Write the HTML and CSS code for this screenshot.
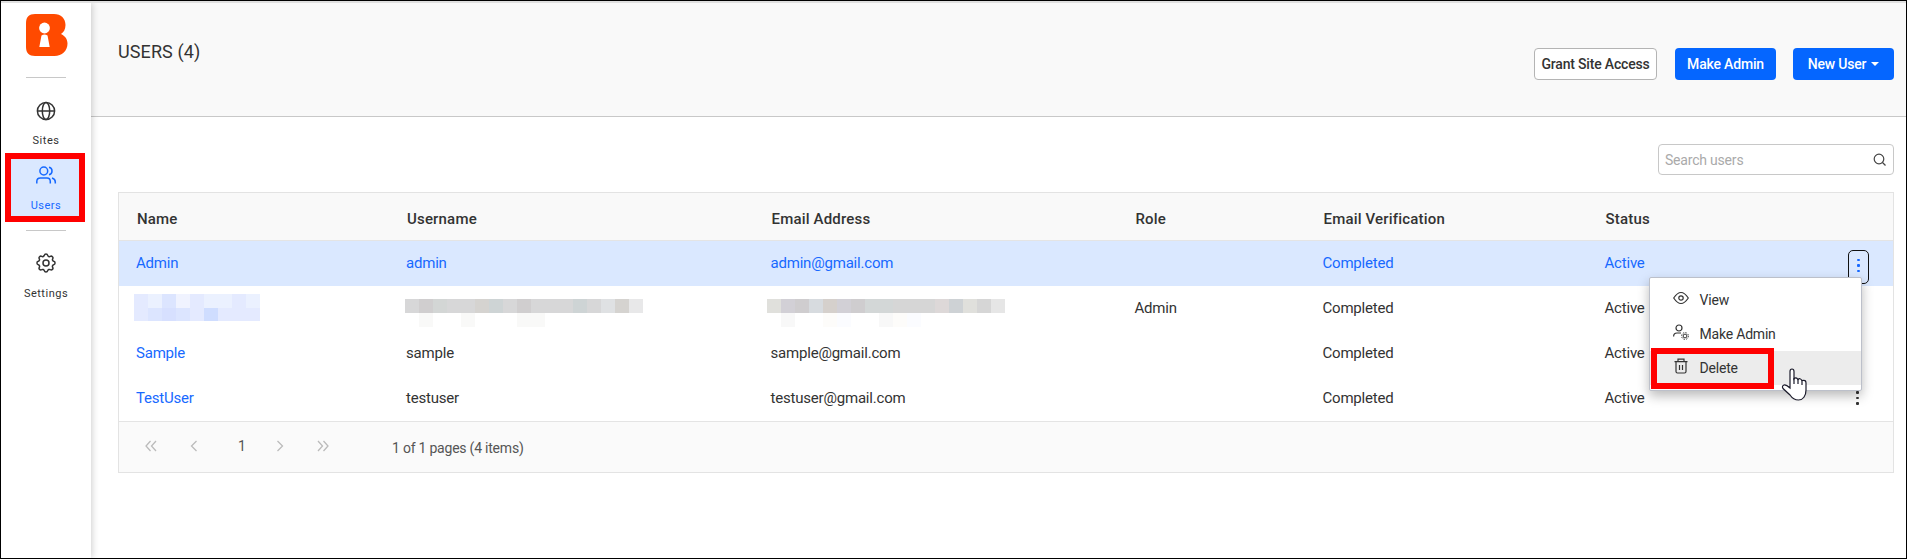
FILE: index.html
```html
<!DOCTYPE html>
<html lang="en">
<head>
<meta charset="utf-8">
<title>Users</title>
<link rel="stylesheet" href="styles.css">
</head>
<body>
<div class="app">
  <nav class="sidebar">
    <svg class="logo" width="42" height="42" viewBox="0 0 42 42"><path fill="#ff4a00" d="M9 0H28C35 0 39.500 4.500 39.500 11C39.500 15.500 37.500 18.500 35 20C39 22 41.500 25 41.500 29.500C41.500 37 36 42 28.500 42H9C3 42 0 39 0 33V9C0 3 3 0 9 0Z"/><circle cx="18.500" cy="14" r="5.400" fill="#fff"/><path fill="#fff" d="M15.500 21.500Q18.500 19.500 21.500 21.500L23.700 33H13.300Z"/></svg>
    <span class="rule"></span>
    <a class="nav-item nav-sites">
      <svg class="icon" width="20" height="20" viewBox="0 0 20 20"><circle cx="10" cy="10" r="8.600"/><ellipse cx="10" cy="10" rx="3.700" ry="8.600"/><path d="M1.400 10H18.600"/></svg>
      <span>Sites</span>
    </a>
    <a class="nav-item nav-users">
      <svg class="icon" width="22" height="19" viewBox="0 0 22 19"><circle cx="8.800" cy="5" r="3.900"/><path d="M1.800 17.500V15.500Q1.800 12 5.300 12H12Q15.300 12 15.300 15.500V17.500M14 1.200A3.900 3.900 0 0 1 14 8.800M17 12Q20.300 12.800 20.300 16V17.500"/></svg>
      <span>Users</span>
    </a>
    <span class="rule"></span>
    <a class="nav-item nav-settings">
      <svg class="icon" width="24" height="24" viewBox="0 0 24 24"><circle cx="12" cy="12" r="3"/><path d="M10.300 4.300c.4-1.800 3-1.800 3.400 0a1.700 1.700 0 0 0 2.600 1.100c1.500-.9 3.300.8 2.400 2.400a1.700 1.700 0 0 0 1 2.500c1.800.4 1.800 3 0 3.400a1.700 1.700 0 0 0-1 2.600c.9 1.500-.9 3.300-2.400 2.400a1.700 1.700 0 0 0-2.600 1c-.4 1.800-3 1.800-3.400 0a1.700 1.700 0 0 0-2.600-1c-1.500.9-3.300-.9-2.400-2.400a1.700 1.700 0 0 0-1-2.600c-1.800-.4-1.800-3 0-3.400a1.700 1.700 0 0 0 1-2.500c-.9-1.600.9-3.300 2.400-2.400 1 .6 2.300.1 2.600-1.100z"/></svg>
      <span>Settings</span>
    </a>
  </nav>
  <main class="main">
    <header class="header">
      <h1 class="title">USERS (4)</h1>
      <div class="actions">
        <button class="btn btn-light">Grant Site Access</button>
        <button class="btn">Make Admin</button>
        <button class="btn">New User<i class="caret"></i></button>
      </div>
    </header>
    <div class="search">
      <span>Search users</span>
      <svg width="14" height="14" viewBox="0 0 14 14"><circle cx="6" cy="6" r="4.800"/><path d="M9.500 9.500L12.500 12.500"/></svg>
    </div>
    <section class="grid">
      <div class="row head"><span>Name</span><span>Username</span><span>Email Address</span><span>Role</span><span>Email Verification</span><span>Status</span><span></span></div>
      <div class="row selected"><span>Admin</span><span>admin</span><span>admin@gmail.com</span><span></span><span>Completed</span><span>Active</span>
        <div class="more-cell"><button class="more"><i></i><i></i><i></i></button>
          <div class="menu">
            <div class="menu-item"><svg width="16" height="14" viewBox="0 0 16 14"><path d="M.7 7Q8-4 15.300 7Q8 18 .7 7Z"/><circle cx="8" cy="7" r="2.200"/></svg><span>View</span></div>
            <div class="menu-item"><svg width="16" height="16" viewBox="0 0 16 16"><circle cx="6" cy="4" r="3"/><path d="M.6 12.500Q.6 9 4 9H8"/><g class="cog"><circle cx="12" cy="12" r="1.900"/><circle cx="12" cy="12" r="3.400" stroke-dasharray="1.400 1.270"/></g></svg><span>Make Admin</span></div>
            <div class="menu-item hover"><svg width="16" height="16" viewBox="0 0 16 16"><path d="M1.500 3.700H14.500M5 3.700V1.200H11V3.700M3 3.700V13.500Q3 15 4.500 15H11.500Q13 15 13 13.500V3.700M6.500 7V12M9.500 7V12"/></svg><span>Delete</span></div>
            <span class="marker"></span>
            <svg class="cursor" width="27" height="34" viewBox="0 0 27 34"><path d="M9 19V3.500Q9 1 11 1T13 3.500V11Q15 8.500 17 11.500Q19 9.500 21 12.500Q25 11.500 25 15V22C25 28 22 32 17.500 32C13 32 11 30 9 27L2 20.500Q.5 18 3 17Q5 16.500 9 20Z"/><path d="M13 10V16M17 11V16M21 12V17"/></svg>
          </div>
        </div>
      </div>
      <div class="row"><span class="mosaic"><svg class="mask-name" width="126" height="27" shape-rendering="crispEdges"><path fill="#e4eaff" d="M0 0H126V27H0Z"/><path fill="#ebf1ff" d="M14 0H28V14H14ZM70 0H98V14H70ZM112 0H126V14H112Z"/><path fill="#dce5ff" d="M28 0H42V14H28ZM14 14H28V27H14ZM42 14H56V27H42Z"/><path fill="#f0f3ff" d="M42 0H56V14H42Z"/><path fill="#d7e0ff" d="M28 14H42V27H28Z"/><path fill="#cfddff" d="M70 14H84V27H70Z"/></svg></span>
        <span class="mosaic"><svg class="mask-user" width="238" height="28" shape-rendering="crispEdges"><path fill="#d7d7d8" d="M0 0H238V14H0Z"/><path fill="#d0cecf" d="M14 0H28V14H14ZM112 0H126V14H112Z"/><path fill="#d3d6d5" d="M28 0H42V14H28Z"/><path fill="#d5d3d0" d="M70 0H84V14H70ZM210 0H224V14H210Z"/><path fill="#ced4d5" d="M84 0H98V14H84ZM168 0H182V14H168Z"/><path fill="#dfe1e3" d="M196 0H210V14H196Z"/><path fill="#e8e8e9" d="M224 0H238V14H224Z"/><path fill="#f9f9f8" d="M14 14H28V28H14ZM56 14H70V28H56ZM112 14H140V28H112Z"/></svg></span>
        <span class="mosaic"><svg class="mask-mail" width="238" height="28" shape-rendering="crispEdges"><path fill="#d6d6d6" d="M0 0H238V14H0Z"/><path fill="#e0e0dc" d="M0 0H14V14H0ZM196 0H210V14H196Z"/><path fill="#d2d0d6" d="M14 0H28V14H14ZM70 0H84V14H70Z"/><path fill="#cfcdcf" d="M28 0H42V14H28ZM84 0H98V14H84Z"/><path fill="#d7dbdf" d="M42 0H56V14H42Z"/><path fill="#d5d0cc" d="M56 0H70V14H56Z"/><path fill="#d3d7d7" d="M98 0H126V14H98Z"/><path fill="#ddd8d8" d="M168 0H182V14H168Z"/><path fill="#ced2d5" d="M182 0H196V14H182Z"/><path fill="#e6e6e6" d="M224 0H238V14H224Z"/><path fill="#f8f8f8" d="M14 14H28V28H14ZM112 14H126V28H112Z"/><path fill="#fdfcfa" d="M56 14H70V28H56ZM126 14H140V28H126Z"/><path fill="#fbfcff" d="M70 14H84V28H70ZM140 14H154V28H140Z"/></svg></span>
        <span>Admin</span><span>Completed</span><span>Active</span><span></span></div>
      <div class="row"><span class="link">Sample</span><span>sample</span><span>sample@gmail.com</span><span></span><span>Completed</span><span>Active</span><span></span></div>
      <div class="row"><span class="link">TestUser</span><span>testuser</span><span>testuser@gmail.com</span><span></span><span>Completed</span><span>Active</span><div class="more-cell"><button class="more plain"><i></i><i></i><i></i></button></div></div>
      <footer class="pager">
        <svg width="12" height="12" viewBox="0 0 12 12"><path d="M5.500 1L1 6L5.500 11M11 1L6.500 6L11 11"/></svg>
        <svg width="12" height="12" viewBox="0 0 12 12"><path d="M8.500 1L3.500 6L8.500 11"/></svg>
        <span class="page">1</span>
        <svg width="12" height="12" viewBox="0 0 12 12"><path d="M3.500 1L8.500 6L3.500 11"/></svg>
        <svg width="12" height="12" viewBox="0 0 12 12"><path d="M1 1L5.500 6L1 11M6.500 1L11 6L6.500 11"/></svg>
        <span class="info">1 of 1 pages (4 items)</span>
      </footer>
    </section>
  </main>
</div>
</body>
</html>
```
FILE: styles.css
```css
* { box-sizing: border-box; }
body { margin: 0; font-family: Roboto, sans-serif; color: #333; background: #fff; }
button { font-family: inherit; }
.app { width: 1907px; height: 559px; border: 1px solid #000; display: flex; overflow: hidden; box-shadow: inset 0 2px #e0e0e0; padding-top: 2px; }
.sidebar { width: 90px; flex: none; display: flex; flex-direction: column; align-items: center; padding-top: 11px; background: #fff; box-shadow: 1px 0 7px rgba(0,0,0,.2); z-index: 1; clip-path: inset(0 -12px 0 0); }
.logo { flex: none; margin-left: 1px; }
.rule { width: 40px; height: 1px; background: #c8c8c8; flex: none; }
.logo + .rule { margin-top: 21px; }
.nav-item { display: flex; flex-direction: column; align-items: center; font-size: 11px; line-height: 14px; letter-spacing: .5px; flex: none; }
.icon { fill: none; stroke: currentColor; stroke-width: 1.500; }
.nav-sites { height: 75px; padding-top: 23px; gap: 13px; }
.nav-users { width: 80px; height: 69px; margin-right: 2px; border: 6px solid #f00; background: #dae8ff; color: #1769ff; padding: 7px 0 0 2px; gap: 14px; }
.nav-users + .rule { margin-top: 8px; }
.nav-settings { padding-top: 20px; gap: 12px; }
.main { flex: 1; min-width: 0; display: flex; flex-direction: column; }
.header { height: 114px; flex: none; display: flex; justify-content: space-between; background: #f9f9f9; border-bottom: 1px solid #c8c8c8; padding: 0 12px 0 27px; }
.title { margin: 38px 0 0; font-size: 18px; line-height: 22px; font-weight: 400; letter-spacing: .1px; }
.actions { display: flex; padding-top: 45px; }
.btn { height: 32px; width: 101px; padding: 0 0 1px; border: 0; border-radius: 4px; background: #0566ff; color: #fff; font-size: 14px; font-weight: 500; letter-spacing: -.18px; margin-left: 17px; display: flex; align-items: center; justify-content: center; }
.btn + .btn { margin-left: 17px; }
.btn-light { width: 123px; background: #fff; color: #333; border: 1px solid #b4b4b4; }
.btn-light + .btn { margin-left: 18px; }
.caret { border: 4px solid transparent; border-top-color: #fff; border-bottom: 0; margin-left: 5px; }
.search { width: 236px; height: 31px; flex: none; margin: 27px 12px 17px auto; padding: 1px 6px 0; border: 1px solid #c8c8c8; border-radius: 4px; display: flex; align-items: center; justify-content: space-between; font-size: 14px; letter-spacing: -.2px; color: #aaa; }
.search svg { fill: none; stroke: #444; stroke-width: 1.200; }
.grid { margin: 0 12px 0 27px; border: 1px solid #e3e3e3; height: 281px; display: flex; flex-direction: column; }
.row { height: 45px; flex: none; display: grid; grid-template-columns: 270px 364.500px 364px 188px 282px 234px 1fr; padding: 0 0 1px 17px; align-items: center; font-size: 15px; line-height: 20px; letter-spacing: -.2px; }
.head { height: 48px; background: #f9f9f9; border-bottom: 1px solid #e4e4e4; font-weight: 500; letter-spacing: .18px; padding: 5px 0 0 18px; }
.selected { background: #dae8ff; }
.selected > span, .link { color: #1769ff; }
.mosaic { position: relative; align-self: stretch; }
.mosaic svg { position: absolute; }
.mask-name { left: -2px; top: 8px; }
.mask-user { left: -1px; top: 13px; }
.mask-mail { left: -4px; top: 13px; }
.more-cell { position: relative; display: flex; }
.more { width: 21px; height: 34px; margin: 8px 0 0 9px; padding: 0 0 3px 1px; border: 1px solid #111; border-radius: 5px; background: none; color: #1769ff; display: flex; flex-direction: column; justify-content: center; align-items: center; gap: 3px; }
.more i { width: 2.500px; height: 2.500px; border-radius: 1px; background: currentColor; }
.more.plain { border-color: transparent; color: #333; margin: 3px 0 0 8px; }
.menu { position: absolute; z-index: 2; left: -190px; top: 35px; width: 213px; height: 114px; padding-top: 5px; border: 1px solid #bcc0ca; background: #fff; box-shadow: 0 5px 12px rgba(0,0,0,.27); border-radius: 2px; }
.menu-item { height: 34px; display: flex; align-items: center; gap: 11px; padding: 0 0 0 23px; font-size: 14px; letter-spacing: -.2px; }
.menu-item svg { fill: none; stroke: #333; stroke-width: 1.200; position: relative; top: -2px; }
.menu-item .cog { stroke-width: 1; }
.hover { background: #ececec; }
.marker { position: absolute; left: 1px; top: 70px; width: 123px; height: 41px; border: 6px solid #f00; }
.cursor { position: absolute; left: 131px; top: 90px; fill: #fff; stroke: #1b1b2b; stroke-width: 1.200; }
.pager { flex: 1; background: #fafafa; border-top: 1px solid #e4e4e4; display: flex; align-items: center; padding: 0 0 2px 26px; font-size: 14px; letter-spacing: -.22px; color: #555; }
.pager svg { fill: none; stroke: #bbb; stroke-width: 1.300; margin-right: 31px; }
.page { width: 8px; margin: 0 28px 0 7px; }
.info { margin-left: 32px; padding-top: 3px; }
```
